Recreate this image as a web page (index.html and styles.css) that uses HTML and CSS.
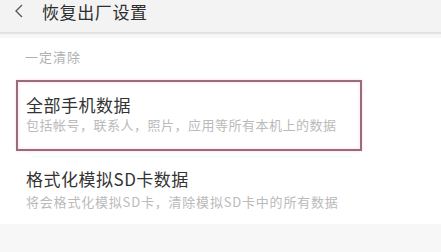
FILE: index.html
```html
<!DOCTYPE html>
<html lang="zh-CN">
<head>
<meta charset="utf-8">
<title>恢复出厂设置</title>
<link rel="stylesheet" href="styles.css">
</head>
<body>
<header class="topbar">
  <svg class="back" width="10" height="14" viewBox="0 0 10 14"><path d="M8 1 L2 7 L8 13" fill="none" stroke="#5a5a5a" stroke-width="1.4"/></svg>
  <span class="title">恢复出厂设置</span>
</header>
<div class="shadow"></div>
<main class="content">
  <div class="label">一定清除</div>
  <div class="item selected">
    <div class="item-title">全部手机数据</div>
    <div class="item-sub">包括帐号，联系人，照片，应用等所有本机上的数据</div>
  </div>
  <div class="divider"></div>
  <div class="item">
    <div class="item-title">格式化模拟SD卡数据</div>
    <div class="item-sub">将会格式化模拟SD卡，清除模拟SD卡中的所有数据</div>
  </div>
</main>
</body>
</html>
```
FILE: styles.css
```css
html, body {
  margin: 0;
  padding: 0;
  background: #f7f7f7;
  font-family: "Noto Sans CJK SC", "Noto Sans", sans-serif;
}
.topbar {
  height: 32px;
  background: #f3f3f3;
  display: flex;
  align-items: flex-start;
  box-sizing: border-box;
}
.back {
  margin: 4px 0 0 14px;
}
.title {
  margin-left: 18px;
  font-size: 17px;
  line-height: 24px;
  letter-spacing: 0.6px;
  color: #2e2e2e;
}
.shadow {
  height: 6px;
  background: linear-gradient(#e2e2e2 0, #e2e2e2 1.5px, #f5f5f5 2px, #f8f8f8 6px);
}
.content {
  background: #fff;
  padding-bottom: 12px;
}
.label {
  height: 42px;
  box-sizing: border-box;
  padding: 9px 0 0 25px;
  font-size: 13px;
  line-height: 20px;
  letter-spacing: 1px;
  color: #b0b0b0;
}
.item {
  margin-left: 16px;
  width: 346px;
  box-sizing: border-box;
  padding: 10px 8px 0 10px;
}
.item.selected {
  border: 2px solid #9a6b7b;
  box-shadow: inset 0 0 3px rgba(255, 170, 200, 0.5), 0 0 2px rgba(255, 170, 200, 0.6);
  padding: 12px 8px 15px 8px;
}
.item-title {
  font-size: 17px;
  line-height: 22px;
  letter-spacing: 0.5px;
  color: #333;
}
.item-sub {
  font-size: 13px;
  line-height: 18px;
  letter-spacing: 0.5px;
  color: #bababa;
  white-space: nowrap;
}
.divider {
  height: 1px;
  margin: 5px 0 0 32px;
  width: 320px;
  background: #eefafa;
}
.plain-gap {
  height: 0;
}
.item + .item .item-title,
.divider + .item .item-title {
  line-height: 24px;
}
.divider + .item .item-sub {
  margin-top: 1px;
  line-height: 20px;
  letter-spacing: 0.8px;
}
```
